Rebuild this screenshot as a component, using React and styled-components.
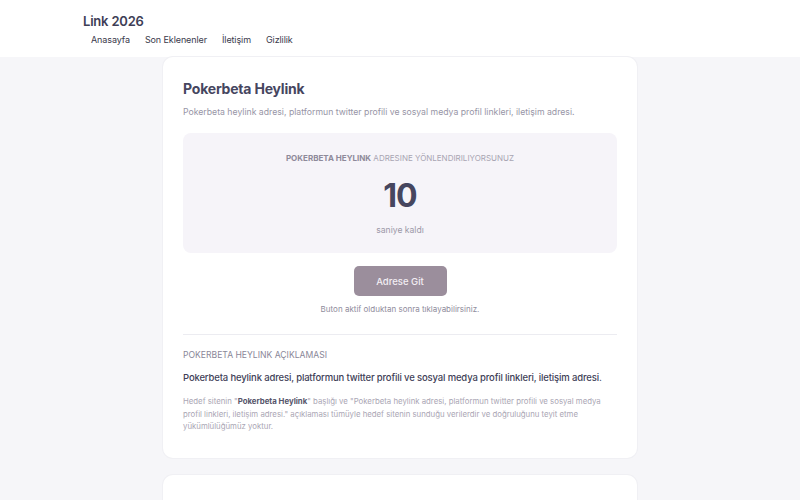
import React from "react";
import styled, { createGlobalStyle } from "styled-components";

const GlobalStyle = createGlobalStyle`
  html, body {
    margin: 0;
    padding: 0;
    background: #f6f6f9;
    font-family: "Inter", "Noto Sans", sans-serif;
    color: #45455e;
  }
  * { box-sizing: border-box; }
`;

const Header = styled.header`
  background: #ffffff;
  height: 57px;
  padding: 13px 0 0 83px;
`;
const Brand = styled.div`
  font-size: 13px;
  font-weight: 600;
  color: #3e3e56;
  letter-spacing: -0.2px;
`;
const Nav = styled.nav`
  display: flex;
  gap: 15px;
  margin: 5px 0 0 8px;
`;
const NavLink = styled.a`
  font-size: 9px;
  color: #3a3a4c;
  text-decoration: none;
  letter-spacing: -0.1px;
`;

const Main = styled.main`
  width: 474px;
  margin: 0 auto;
  display: flex;
  flex-direction: column;
  gap: 17px;
`;
const Card = styled.section`
  background: #ffffff;
  border-radius: 10px;
  padding: ${p => p.$compact ? "22px 20px" : "23px 20px 25px"};
  box-shadow: 0 0 0 1px #f0f0f4;
`;
const Title = styled.h1`
  margin: 0;
  font-size: 14px;
  font-weight: 700;
  color: #46465f;
  letter-spacing: -0.2px;
`;
const Lead = styled.p`
  margin: 10px 0 0;
  font-size: 8.7px;
  color: #9795a6;
`;
const Countdown = styled.div`
  margin-top: 16px;
  background: #f6f4f9;
  border-radius: 8px;
  height: 120px;
  display: flex;
  flex-direction: column;
  align-items: center;
  padding-top: 20px;
`;
const Notice = styled.div`
  font-size: 8px;
  color: #a8a4b2;
  text-transform: uppercase;
  strong { color: #8e8a9a; font-weight: 700; }
`;
const Seconds = styled.div`
  margin-top: 17px;
  font-size: 32px;
  font-weight: 700;
  color: #46465f;
  letter-spacing: -1px;
  line-height: 1;
`;
const Remaining = styled.div`
  margin-top: 13px;
  font-size: 8.6px;
  color: #9c98a8;
`;
const Actions = styled.div`
  display: flex;
  flex-direction: column;
  align-items: center;
  margin-top: 13px;
`;
const GoButton = styled.button`
  width: 93px;
  height: 30px;
  border: none;
  border-radius: 5px;
  background: #9b8e9c;
  color: #f3eff4;
  font-family: inherit;
  font-size: 9.5px;
  font-weight: 500;
`;
const Hint = styled.div`
  margin-top: 8px;
  font-size: 8px;
  color: #8f8c9c;
`;
const Divider = styled.hr`
  border: none;
  border-top: 1px solid #ececf1;
  margin: 20px 0 15px;
`;
const SectionLabel = styled.h2`
  margin: 0;
  font-size: 8.6px;
  font-weight: 400;
  color: #8a8798;
  text-transform: uppercase;
`;
const Summary = styled.p`
  margin: 12px 0 0;
  font-size: 9.5px;
  font-weight: 500;
  color: #3f3f58;
  letter-spacing: -0.15px;
  white-space: nowrap;
`;
const Disclaimer = styled.p`
  margin: 12px 0 0;
  font-size: 7.8px;
  line-height: 12.5px;
  color: #aaa6b4;
  strong { color: #56546a; font-weight: 700; }
`;

const desc = "Pokerbeta heylink adresi, platformun twitter profili ve sosyal medya profil linkleri, iletişim adresi.";

export default function App() {
  return (
    <>
      <GlobalStyle />
      <Header>
        <Brand>Link 2026</Brand>
        <Nav>
          <NavLink href="#">Anasayfa</NavLink>
          <NavLink href="#">Son Eklenenler</NavLink>
          <NavLink href="#">İletişim</NavLink>
          <NavLink href="#">Gizlilik</NavLink>
        </Nav>
      </Header>
      <Main>
        <Card>
          <Title>Pokerbeta Heylink</Title>
          <Lead>{desc}</Lead>
          <Countdown>
            <Notice><strong>Pokerbeta Heylink</strong> adresine yönlendiriliyorsunuz</Notice>
            <Seconds>10</Seconds>
            <Remaining>saniye kaldı</Remaining>
          </Countdown>
          <Actions>
            <GoButton disabled>Adrese Git</GoButton>
            <Hint>Buton aktif olduktan sonra tıklayabilirsiniz.</Hint>
          </Actions>
          <Divider />
          <SectionLabel>Pokerbeta Heylink Açıklaması</SectionLabel>
          <Summary>{desc}</Summary>
          <Disclaimer>
            Hedef sitenin "<strong>Pokerbeta Heylink</strong>" başlığı ve "Pokerbeta heylink adresi, platformun twitter profili ve sosyal medya profil linkleri, iletişim adresi." açıklaması tümüyle hedef sitenin sunduğu verilerdir ve doğruluğunu teyit etme yükümlülüğümüz yoktur.
          </Disclaimer>
        </Card>
        <Card $compact>
          <Title>Benzer Linkler</Title>
        </Card>
      </Main>
    </>
  );
}
